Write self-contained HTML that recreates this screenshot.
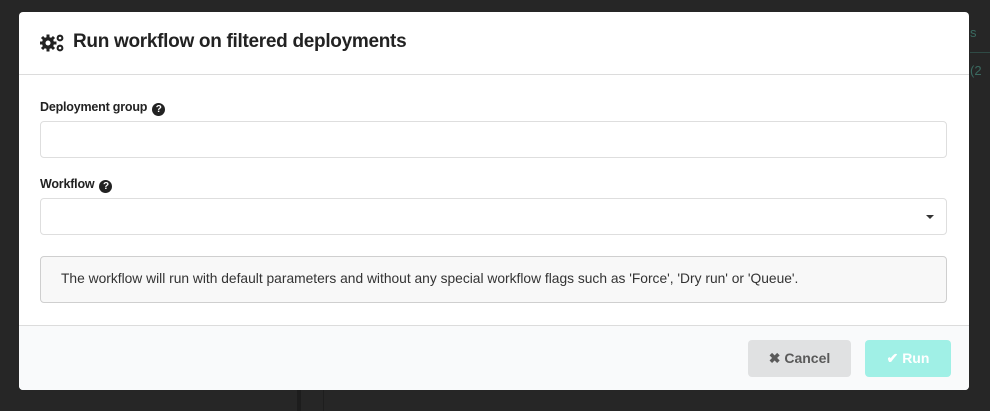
<!DOCTYPE html>
<html><head><style>
body{margin:0;width:990px;height:411px;background:#242424;font-family:"Liberation Sans",sans-serif;position:relative;overflow:hidden}
.bg1{position:absolute;left:0;top:0;width:990px;height:411px;background:#262626}
.modal{position:absolute;left:19px;top:12px;width:950px;height:378px;background:#fff;border-radius:4px;overflow:hidden}
.hdr{border-bottom:1px solid #dcdcdc;box-sizing:border-box;height:63px;position:relative}
.hdr span{position:absolute;left:54px;top:19px;font-size:19px;font-weight:bold;color:#222;letter-spacing:-0.3px}
.lbl{position:absolute;left:21px;font-size:12.5px;font-weight:bold;color:#222;letter-spacing:-0.2px}
.q{display:inline-block;width:13px;height:13px;border-radius:50%;background:#222;color:#fff;font-size:10px;text-align:center;line-height:13px;margin-left:5px;vertical-align:-1px}
.inp{position:absolute;left:21px;width:907px;height:37px;border:1px solid #dedede;border-radius:4px;box-sizing:border-box}
.msg{position:absolute;left:21px;top:244px;width:907px;height:47px;border:1px solid #cfcfcf;border-radius:4px;background:#f8f8f8;box-sizing:border-box;font-size:13.8px;color:#333;padding:14px 0 0 20px}
.ftr{position:absolute;left:0;top:313px;width:950px;height:65px;background:#f9fafb;border-top:1px solid #dcdcdc}
.btn{position:absolute;top:14px;height:37px;border-radius:4px;font-size:14px;font-weight:bold;line-height:37px;text-align:center}
</style></head><body>
<div class="bg1"></div>
<div style="position:absolute;left:970px;top:14px;width:20px;height:38px;border-bottom:1px solid #2f4a45;color:#3a6a60;font-size:13px;line-height:38px">s (2</div>
<div style="position:absolute;left:297px;top:390px;width:4px;height:21px;background:#1d1d1d"></div>
<div style="position:absolute;left:323px;top:390px;width:1px;height:21px;background:#1e1e1e"></div>
<div class="modal">
 <div class="hdr">
  <svg style="position:absolute;left:21px;top:21px" width="26" height="20" viewBox="0 0 26 20">
   <g fill="#222">
    <circle cx="8" cy="10" r="6"/>
    <g stroke="#222" stroke-width="3"><line x1="8" y1="1.5" x2="8" y2="18.5"/><line x1="-0.5" y1="10" x2="16.5" y2="10"/><line x1="2" y1="4" x2="14" y2="16"/><line x1="14" y1="4" x2="2" y2="16"/></g>
    <circle cx="8" cy="10" r="2.5" fill="#fff"/>
    <circle cx="20" cy="5" r="3.4"/><circle cx="20" cy="5" r="1.3" fill="#fff"/>
    <circle cx="20" cy="15" r="3.4"/><circle cx="20" cy="15" r="1.3" fill="#fff"/>
   </g>
  </svg>
  <span>Run workflow on filtered deployments</span>
 </div>
 <div class="lbl" style="top:88px">Deployment group<span class="q">?</span></div>
 <div class="inp" style="top:109px"></div>
 <div class="lbl" style="top:165px">Workflow<span class="q">?</span></div>
 <div class="inp" style="top:186px"><div style="position:absolute;right:12px;top:16px;border-left:4px solid transparent;border-right:4px solid transparent;border-top:4px solid #333"></div></div>
 <div class="msg">The workflow will run with default parameters and without any special workflow flags such as 'Force', 'Dry run' or 'Queue'.</div>
 <div class="ftr">
  <div class="btn" style="left:729px;width:103px;background:#e0e1e2;color:#5a5a5a">✖ Cancel</div>
  <div class="btn" style="left:846px;width:86px;background:#a0f0e6;color:#fff">✔ Run</div>
 </div>
</div>
</body></html>
